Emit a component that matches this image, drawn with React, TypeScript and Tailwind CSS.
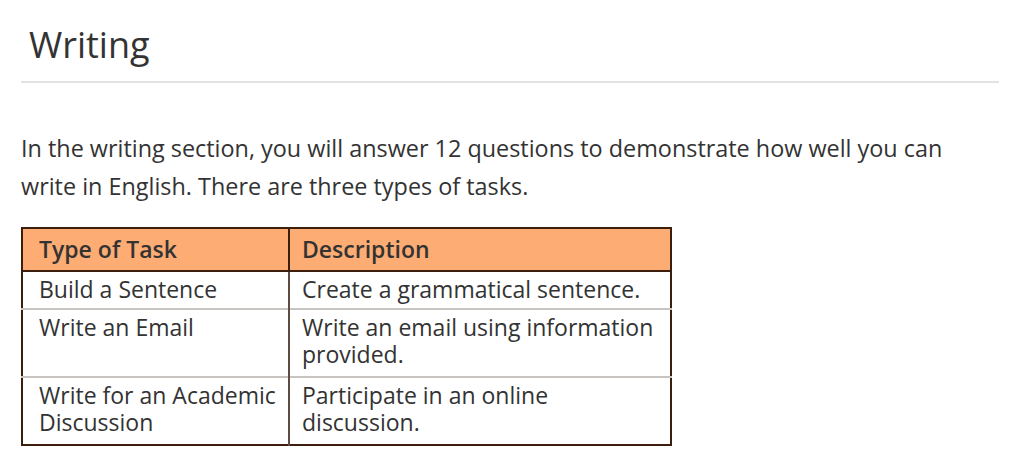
import React from "react";

const rows = [
  ["Build a Sentence", "Create a grammatical sentence."],
  ["Write an Email", "Write an email using information provided."],
  ["Write for an Academic Discussion", "Participate in an online discussion."],
];

export default function App() {
  return (
    <div
      className="w-[1020px] h-[472px] bg-white px-[21px] text-[#333333]"
      style={{ fontFamily: '"Open Sans", sans-serif' }}
    >
      <h1 className="pt-[21px] pl-[8px] pb-[12px] text-[36px] leading-[48px] font-normal border-b-2 border-[#e3e3e3]">
        Writing
      </h1>
      <p className="mt-[46px] text-[23.4px] leading-[38px]">
        In the writing section, you will answer 12 questions to demonstrate how well you can
        write in English. There are three types of tasks.
      </p>
      <table className="mt-[22px] w-[651px] border-collapse border-2 border-[#3b1e0e] text-[23px] leading-[27px]">
        <thead>
          <tr className="bg-[#fdac74]">
            <th className="w-[267px] border-2 border-[#3b1e0e] pl-[16px] pr-2 pt-[7px] pb-[7px] text-left font-semibold">
              Type of Task
            </th>
            <th className="border-2 border-[#3b1e0e] pl-[12px] pr-2 pt-[7px] pb-[7px] text-left font-semibold">
              Description
            </th>
          </tr>
        </thead>
        <tbody>
          {rows.map((r, i) => (
            <tr key={r[0]}>
              <td
                className={
                  i === 0
                    ? "align-top border-r-2 border-r-[#5e4c42] pl-[16px] pr-2 pt-[4px] pb-[5px]"
                    : "align-top border-r-2 border-r-[#5e4c42] border-t-2 border-t-[#c8c4c2] pl-[16px] pr-2 pt-[4px] pb-[8px]"
                }
              >
                {r[0]}
              </td>
              <td
                className={
                  i === 0
                    ? "align-top pl-[12px] pr-2 pt-[4px] pb-[5px]"
                    : "align-top border-t-2 border-t-[#c8c4c2] pl-[12px] pr-2 pt-[4px] pb-[8px]"
                }
              >
                {r[1]}
              </td>
            </tr>
          ))}
        </tbody>
      </table>
    </div>
  );
}
